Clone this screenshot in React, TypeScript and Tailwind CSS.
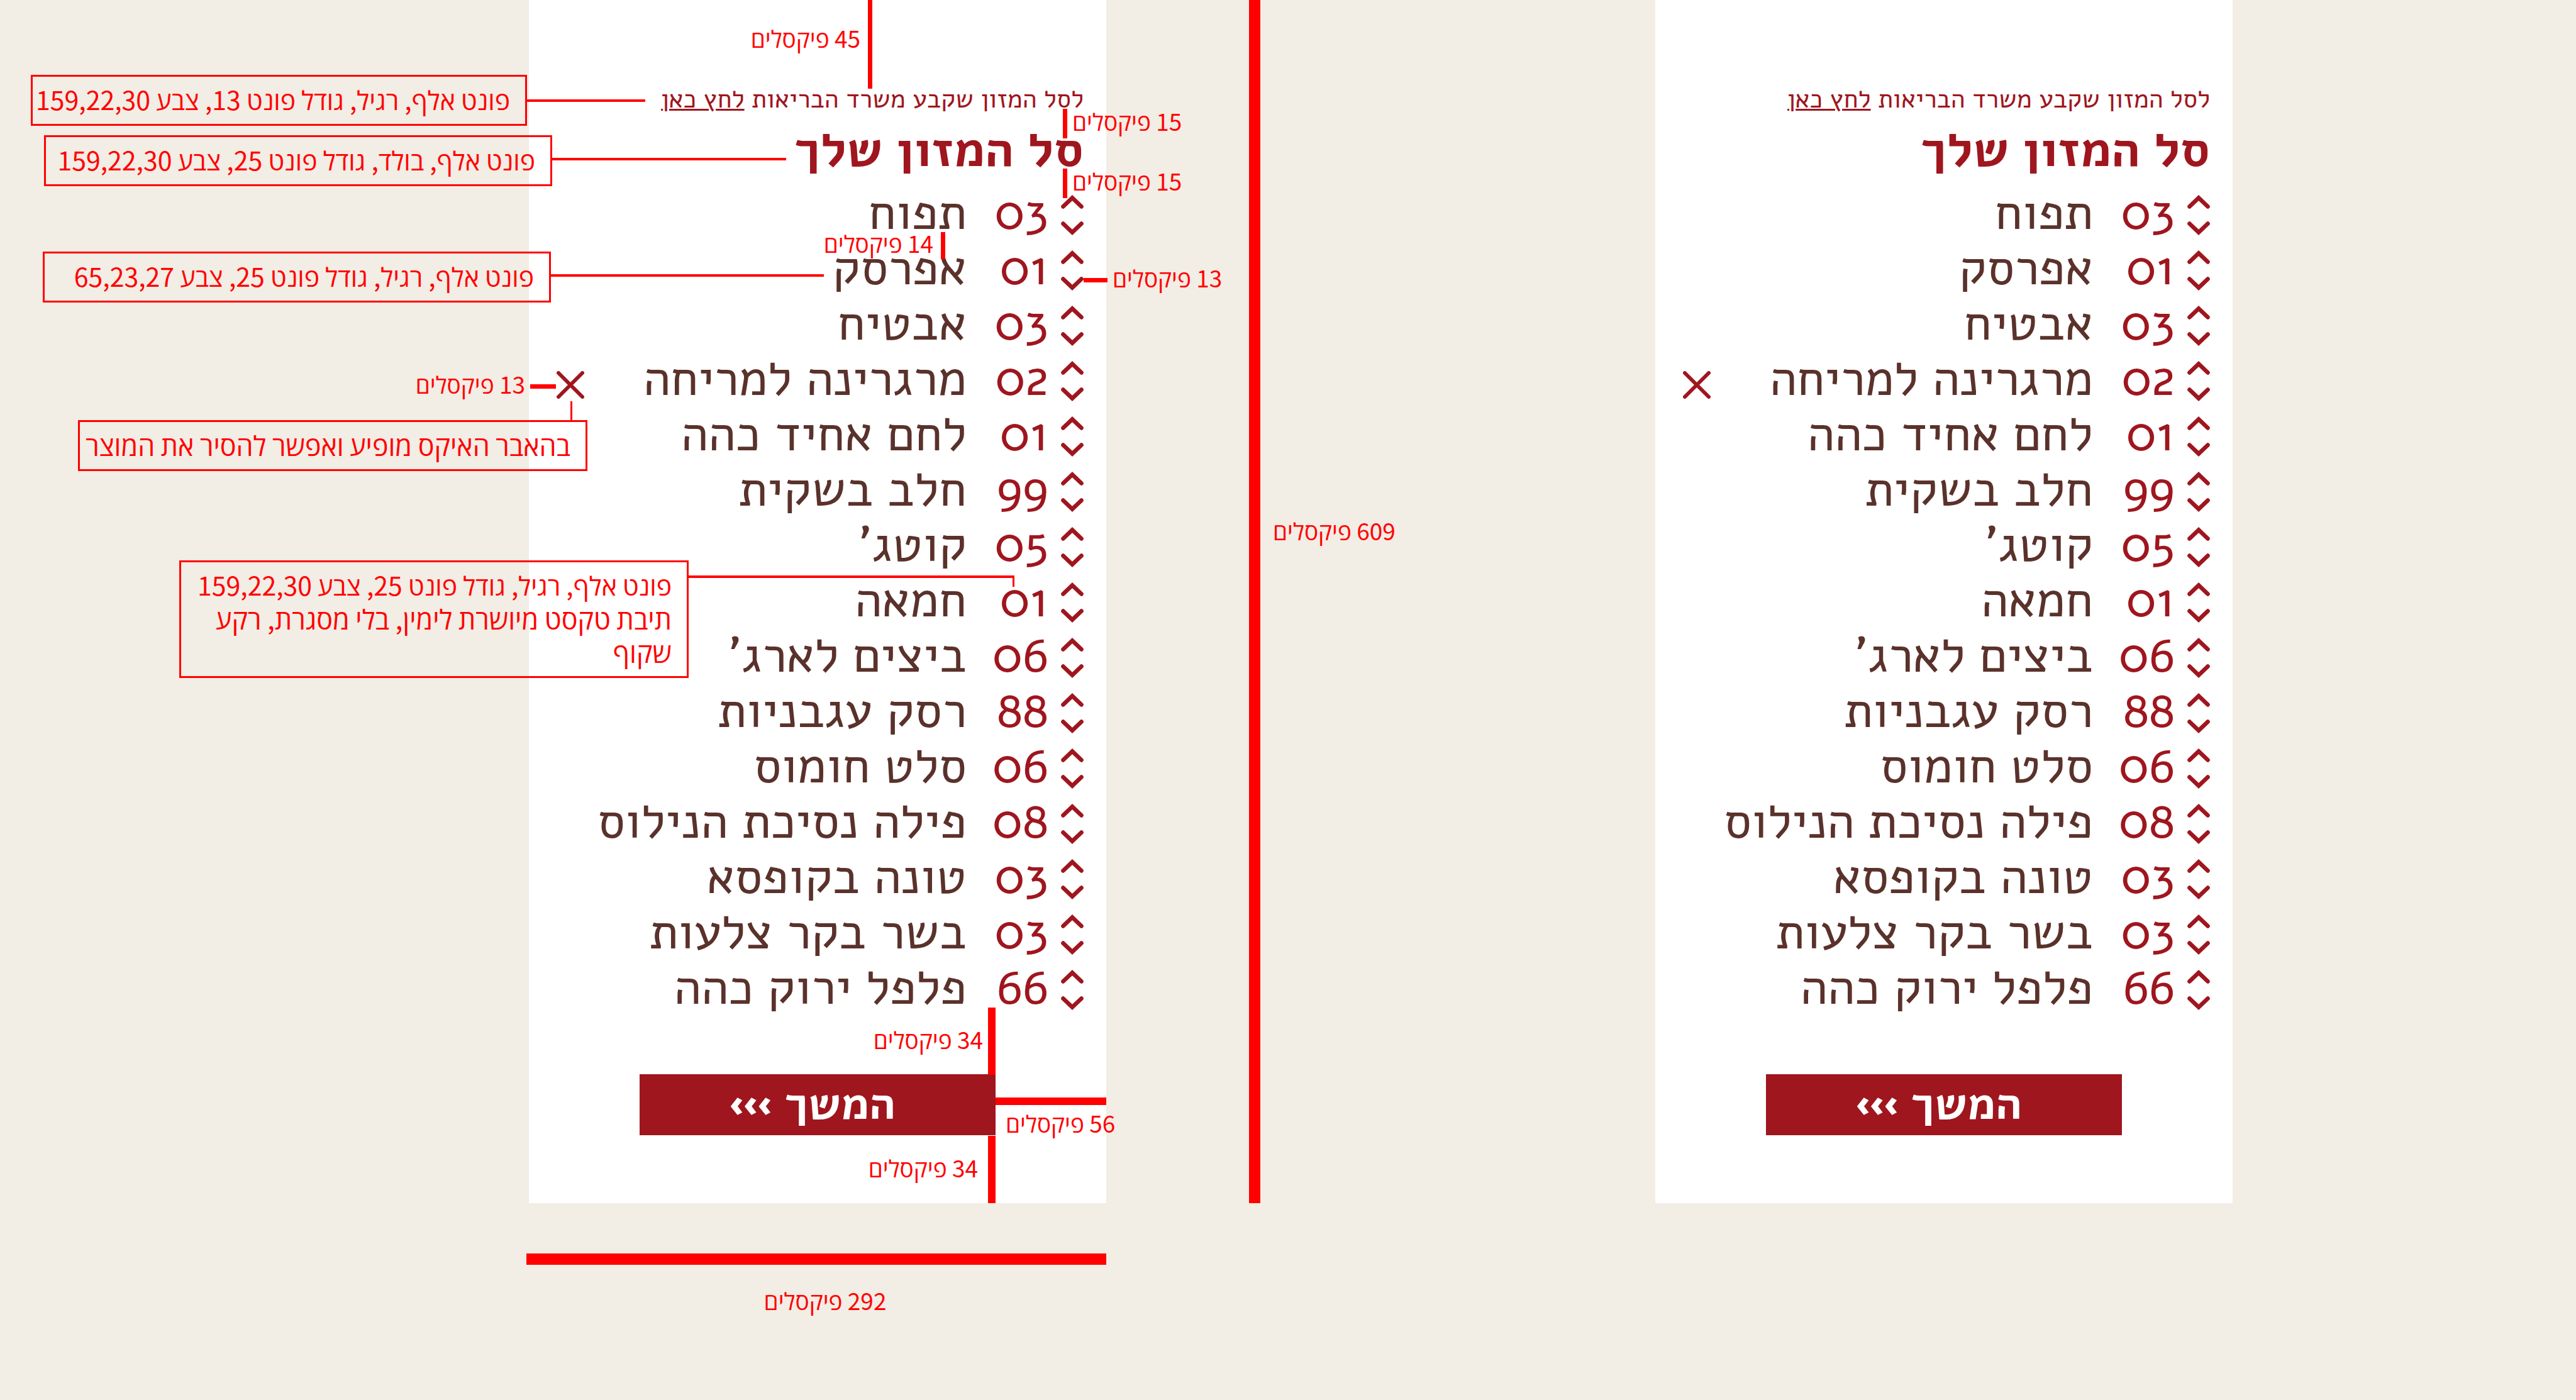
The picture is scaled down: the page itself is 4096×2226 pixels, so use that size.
type Item = { qty: string; name: string; removable?: boolean };

const items: Item[] = [
  { qty: "03", name: "תפוח" },
  { qty: "01", name: "אפרסק" },
  { qty: "03", name: "אבטיח" },
  { qty: "02", name: "מרגרינה למריחה", removable: true },
  { qty: "01", name: "לחם אחיד כהה" },
  { qty: "99", name: "חלב בשקית" },
  { qty: "05", name: "קוטג’" },
  { qty: "01", name: "חמאה" },
  { qty: "06", name: "ביצים לארג’" },
  { qty: "88", name: "רסק עגבניות" },
  { qty: "06", name: "סלט חומוס" },
  { qty: "08", name: "פילה נסיכת הנילוס" },
  { qty: "03", name: "טונה בקופסא" },
  { qty: "03", name: "בשר בקר צלעות" },
  { qty: "66", name: "פלפל ירוק כהה" },
];

function Chevron({ down = false }: { down?: boolean }) {
  return (
    <svg width="36" height="22" viewBox="0 0 36 22" fill="none" stroke="currentColor" strokeWidth="6.6" strokeLinecap="round" aria-hidden="true">
      <path d={down ? "M3.5 3.6 18 17.4 32.5 3.6" : "M3.5 18.4 18 4.6 32.5 18.4"} />
    </svg>
  );
}

function Row({ item }: { item: Item }) {
  return (
    <li className="flex h-[88px] items-center">
      <div className="flex flex-col gap-5 text-[#9f161e]">
        <button type="button" aria-label={`הוסף ${item.name}`}>
          <Chevron />
        </button>
        <button type="button" aria-label={`הפחת ${item.name}`}>
          <Chevron down />
        </button>
      </div>
      <input
        aria-label={`כמות ${item.name}`}
        defaultValue={item.qty}
        className="ms-5 mb-2 h-[80px] w-[130px] bg-transparent text-right text-[79px] text-[#9f161e]"
      />
      <span className="mb-2 text-[79px] leading-[80px] whitespace-nowrap text-[#5a322b]">{item.name}</span>
      {item.removable && (
        <button type="button" aria-label={`הסר ${item.name}`} className="ms-auto me-2 pt-3 text-[#9f161e]">
          <svg width="44" height="44" viewBox="0 0 44 44" fill="none" stroke="currentColor" strokeWidth="6" strokeLinecap="round" aria-hidden="true">
            <path d="M3 3 41 41M41 3 3 41" />
          </svg>
        </button>
      )}
    </li>
  );
}

function Basket() {
  return (
    <section dir="rtl" className="bg-white px-9 pt-[130px] pb-[108px] font-['Alef','Open_Sans',sans-serif]">
      <p className="text-[41px] leading-[56px] whitespace-nowrap text-[#9f161e]">
        לסל המזון שקבע משרד הבריאות{" "}
        <a href="#ministry" className="underline decoration-3 underline-offset-2">
          לחץ כאן
        </a>
      </p>
      <h1 className="mt-2 text-[79px] leading-[88px] font-bold whitespace-nowrap text-[#9f161e]">סל המזון שלך</h1>
      <ul className="mt-4">
        {items.map((item) => (
          <Row key={item.name} item={item} />
        ))}
      </ul>
      <div className="mt-[90px] flex justify-center">
        <button
          type="button"
          className="flex h-[97px] w-[566px] items-center justify-center gap-5 bg-[#9f161e] ps-4 pb-1 text-[72px] leading-[80px] font-bold text-white"
        >
          המשך
          <span className="pb-1 font-['Open_Sans',sans-serif] text-[56px] font-extrabold">›››</span>
        </button>
      </div>
    </section>
  );
}

const labelText = "pb-2 text-[37px] leading-[40px] whitespace-nowrap";
const box = "shrink-0 border-3 border-[#ff0000] px-6 pt-[9px] pb-[13px] leading-[53px] whitespace-nowrap";
const rule = "shrink-0 bg-[#ff0000]";

function Label({ value }: { value: number }) {
  return (
    <span dir="rtl" className={labelText}>
      {value} פיקסלים
    </span>
  );
}

// Redline notes pinned over the basket: each pin is one group of a measure or box with its line.
function Notes() {
  return (
    <div className="pointer-events-none absolute inset-0 font-['Noto_Sans_CJK_SC','Open_Sans',sans-serif] text-[#ff0000]">
      <div className="absolute top-0 right-[372px] flex items-start gap-3">
        <div className="pt-10">
          <Label value={45} />
        </div>
        <div className={`${rule} h-[141px] w-[7px]`} />
      </div>
      <div className="absolute top-[172px] left-[849px] flex items-center gap-2">
        <div className={`${rule} h-[47px] w-[7px]`} />
        <Label value={15} />
      </div>
      <div className="absolute top-[267px] left-[849px] flex items-center gap-2">
        <div className={`${rule} h-[47px] w-[7px]`} />
        <Label value={15} />
      </div>
      <div className="absolute top-[366px] right-[256px] flex items-center gap-3">
        <Label value={14} />
        <div className={`${rule} h-[43px] w-[7px]`} />
      </div>
      <div className="absolute top-[421px] left-[882px] flex items-center gap-2">
        <div className={`${rule} h-[7px] w-[38px]`} />
        <Label value={13} />
      </div>
      <div className="absolute top-[590px] right-[875px] flex items-center gap-2">
        <Label value={13} />
        <div className={`${rule} h-[7px] w-[41px]`} />
      </div>

      <div className="absolute top-[119px] right-[733px] flex items-center">
        <p dir="rtl" className={`${box} w-[789px] text-[41px]`}>
          פונט אלף, רגיל, גודל פונט 13, צבע 159,22,30
        </p>
        <div className={`${rule} h-[4px] w-[188px]`} />
      </div>
      <div className="absolute top-[215px] right-[509px] flex items-start">
        <p dir="rtl" className={`${box} w-[808px] text-[41px]`}>
          פונט אלף, בולד, גודל פונט 25, צבע 159,22,30
        </p>
        <div className={`${rule} mt-9 h-[4px] w-[372px]`} />
      </div>
      <div className="absolute top-[400px] right-[449px] flex items-start">
        <p dir="rtl" className={`${box} w-[808px] text-[41px]`}>
          פונט אלף, רגיל, גודל פונט 25, צבע 65,23,27
        </p>
        <div className={`${rule} mt-9 h-[4px] w-[434px]`} />
      </div>
      <div className="absolute top-[638px] right-[825px] flex flex-col items-end">
        <div className={`${rule} me-6 h-[30px] w-[3px]`} />
        <p dir="rtl" className={`${box} w-[810px] text-[43px]`}>
          בהאבר האיקס מופיע ואפשר להסיר את המוצר
        </p>
      </div>
      <div className="absolute top-[891px] right-[146px] flex items-start">
        <div dir="rtl" className={`${box} w-[810px] text-[41px]`}>
          <p>פונט אלף, רגיל, גודל פונט 25, צבע 159,22,30</p>
          <p className="text-[43px]">
            תיבת טקסט מיושרת לימין, בלי מסגרת, רקע
            <br />
            שקוף
          </p>
        </div>
        <div className="mt-6 h-[18px] w-[518px] shrink-0 border-t-4 border-r-3 border-[#ff0000]" />
      </div>

      <div className="absolute top-[1602px] right-[176px] flex items-center gap-2">
        <Label value={34} />
        <div className={`${rule} h-[107px] w-[12px]`} />
      </div>
      <div className="absolute top-[1745px] left-[742px] flex w-[176px] flex-col items-start gap-2">
        <div className={`${rule} h-[12px] w-full`} />
        <div className="ps-4">
          <Label value={56} />
        </div>
      </div>
      <div className="absolute top-[1806px] right-[176px] flex items-center gap-4">
        <Label value={34} />
        <div className={`${rule} h-[107px] w-[12px]`} />
      </div>
    </div>
  );
}

export default function App() {
  return (
    <main className="grid min-h-screen grid-cols-[841fr_918fr_873fr_918fr_546fr] grid-rows-[auto_1fr] bg-[#f2ede5]">
      <div className="relative col-start-2">
        <Basket />
        <Notes />
      </div>
      <div className="flex items-stretch gap-5 ps-[227px] font-['Noto_Sans_CJK_SC','Open_Sans',sans-serif] text-[#ff0000]">
        <div className="w-[18px] bg-[#ff0000]" />
        <div className="pt-[823px]">
          <Label value={609} />
        </div>
      </div>
      <Basket />
      <div className="col-start-2 row-start-2 -ms-1 pt-[80px] font-['Noto_Sans_CJK_SC','Open_Sans',sans-serif] text-[#ff0000]">
        <div className="h-[18px] bg-[#ff0000]" />
        <div className="flex justify-center ps-7 pt-9">
          <Label value={292} />
        </div>
      </div>
    </main>
  );
}
